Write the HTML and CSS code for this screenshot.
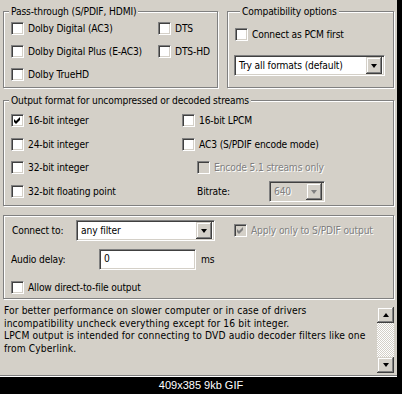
FILE: index.html
```html
<!DOCTYPE html>
<html lang="en">
<head>
  <meta charset="UTF-8">
  <meta name="viewport" content="width=device-width, initial-scale=1.0">
  <title>Audio settings</title>
  <link rel="stylesheet" href="styles.css">
</head>
<body>
  <div class="screen">
    <div class="top-row">
      <div class="group pass">
        <div class="group-title">Pass-through (S/PDIF, HDMI)</div>
        <div class="pass-grid">
          <label class="check"><span class="cb"></span>Dolby Digital (AC3)</label>
          <label class="check"><span class="cb"></span>DTS</label>
          <label class="check"><span class="cb"></span>Dolby Digital Plus (E-AC3)</label>
          <label class="check"><span class="cb"></span>DTS-HD</label>
          <label class="check"><span class="cb"></span>Dolby TrueHD</label>
        </div>
      </div>
      <div class="group compat">
        <div class="group-title">Compatibility options</div>
        <label class="check pcm"><span class="cb"></span>Connect as PCM first</label>
        <div class="combo formats"><span class="combo-text">Try all formats (default)</span><span class="combo-btn"><i></i></span></div>
      </div>
    </div>

    <div class="group output">
      <div class="group-title">Output format for uncompressed or decoded streams</div>
      <div class="out-grid">
        <label class="check"><span class="cb"><svg width="7" height="7" viewBox="0 0 7 7"><path d="M0 2l2 2 4-4v3l-4 4-2-2z"/></svg></span>16-bit integer</label>
        <label class="check"><span class="cb"></span>16-bit LPCM</label>
        <label class="check"><span class="cb"></span>24-bit integer</label>
        <label class="check"><span class="cb"></span>AC3 (S/PDIF encode mode)</label>
        <label class="check"><span class="cb"></span>32-bit integer</label>
        <label class="check disabled indent"><span class="cb"></span>Encode 5.1 streams only</label>
        <label class="check"><span class="cb"></span>32-bit floating point</label>
        <div class="bitrate">
          <span class="bitrate-label">Bitrate:</span>
          <div class="combo disabled rate"><span class="combo-text">640</span><span class="combo-btn"><i></i></span></div>
        </div>
      </div>
    </div>

    <div class="group misc">
      <div class="misc-row">
        <span class="connect-label">Connect to:</span>
        <div class="combo connect"><span class="combo-text">any filter</span><span class="combo-btn"><i></i></span></div>
        <label class="check disabled apply"><span class="cb"><svg width="7" height="7" viewBox="0 0 7 7"><path d="M0 2l2 2 4-4v3l-4 4-2-2z"/></svg></span>Apply only to S/PDIF output</label>
      </div>
      <div class="misc-row delay">
        <span class="delay-label">Audio delay:</span>
        <div class="field">0</div>
        <span class="unit">ms</span>
      </div>
      <label class="check direct"><span class="cb"></span>Allow direct-to-file output</label>
    </div>

    <div class="notes">
      <p class="notes-text">For better performance on slower computer or in case of drivers<br>incompatibility uncheck everything except for 16 bit integer.<br>LPCM output is intended for connecting to DVD audio decoder filters like one<br>from Cyberlink.</p>
      <div class="scrollbar">
        <span class="sb-btn"><i class="up"></i></span>
        <span class="sb-track"></span>
        <span class="sb-btn"><i></i></span>
      </div>
    </div>
  </div>
  <div class="caption">409x385 9kb GIF</div>
</body>
</html>
```

FILE: styles.css
```css
*{margin:0;padding:0;box-sizing:border-box;}
html,body{background:#000;}
body{width:402px;height:394px;overflow:hidden;}

.screen{width:397px;height:377px;background:#d4d0c8;color:#000;font:10.2px/13px "DejaVu Sans Condensed","DejaVu Sans",sans-serif;font-stretch:condensed;letter-spacing:-0.15px;padding-top:11px;}

/* etched group boxes */
.group{border:1px solid #808080;box-shadow:inset 1px 1px #fff,1px 1px #fff;margin-left:3px;}
.group-title{display:table;margin:-7px 0 -1px 5px;padding:0 2px;background:#d4d0c8;}

.top-row{display:flex;gap:9px;}
.pass{width:215px;height:77px;}
.compat{width:167px;height:77px;margin-left:0;padding-left:7px;}
.pass-grid{display:grid;grid-template-columns:147px auto;grid-auto-rows:23px;padding-left:7px;}

.check{display:flex;align-items:center;gap:4px;white-space:nowrap;}
.cb{width:13px;height:13px;flex:none;background:#fff;border:1px solid;border-color:#808080 #fff #fff #808080;box-shadow:inset 1px 1px #404040,inset -1px -1px #d4d0c8;display:flex;align-items:center;justify-content:center;}
.cb svg{fill:#000;}
.disabled{color:#808080;text-shadow:1px 1px #fff;}
.disabled .cb{background:#d4d0c8;}
.disabled .cb svg{fill:#808080;}

.pcm{height:23px;margin-top:6px;}

/* combo boxes */
.combo{height:21px;display:flex;align-items:center;background:#fff;border:1px solid;border-color:#808080 #fff #fff #808080;box-shadow:inset 1px 1px #404040,inset -1px -1px #d4d0c8;padding:2px;}
.combo-text{flex:1;padding-left:2px;white-space:nowrap;}
.combo-btn{width:16px;height:17px;flex:none;background:#d4d0c8;box-shadow:inset -1px -1px #404040,inset 1px 1px #d4d0c8,inset -2px -2px #808080,inset 2px 2px #fff;display:flex;align-items:center;justify-content:center;}
.combo-btn i{border:3.5px solid transparent;border-top:4px solid #000;border-bottom:0;margin-top:1px;}
.combo.disabled{background:#d4d0c8;}
.combo.disabled .combo-btn i{border-top-color:#808080;}
.formats{width:151px;margin:9px 0 0 -1px;}

.output{width:391px;height:106px;margin-top:12px;}
.out-grid{display:grid;grid-template-columns:171px auto;grid-auto-rows:23.5px;padding:3px 0 0 7px;}
.indent{margin-left:15px;}
.bitrate{display:flex;align-items:center;padding-left:15px;}
.bitrate-label{width:72px;}
.rate{width:56px;}

.misc{width:391px;height:84px;margin-top:9px;padding:4px 0 0 7px;}
.misc-row{display:flex;align-items:center;height:21px;}
.connect-label{width:65px;padding-left:1px;}
.connect{width:139px;}
.apply{margin-left:19px;}
.delay{margin-top:8px;}
.delay-label{width:88px;}
.field{width:97px;height:21px;background:#fff;border:1px solid;border-color:#808080 #fff #fff #808080;box-shadow:inset 1px 1px #404040,inset -1px -1px #d4d0c8;padding:1px 0 0 4px;line-height:15px;}
.unit{margin-left:5px;}
.direct{height:13px;margin-top:11px;}

/* description box */
.notes{display:flex;height:76px;margin-top:1px;border-bottom:1px solid #808080;box-shadow:0 1px #fff;}
.notes-text{flex:1;padding:5px 0 0 4px;line-height:12.7px;letter-spacing:0.12px;white-space:nowrap;overflow:hidden;}
.scrollbar{width:17px;display:flex;flex-direction:column;margin:7px 3px 2px 0;}
.sb-btn{height:16px;background:#d4d0c8;box-shadow:inset -1px -1px #404040,inset 1px 1px #d4d0c8,inset -2px -2px #808080,inset 2px 2px #fff;display:flex;align-items:center;justify-content:center;}
.sb-btn i{border:3.5px solid transparent;border-top:4px solid #000;border-bottom:0;}
.sb-btn i.up{border-top:0;border-bottom:4px solid #000;}
.sb-track{flex:1;background:repeating-conic-gradient(#fff 0 25%,#d4d0c8 0 50%) 0 0/2px 2px;}

.caption{height:17px;color:#fff;text-align:center;font:11px/17px "Liberation Sans",Arial,sans-serif;}
```
